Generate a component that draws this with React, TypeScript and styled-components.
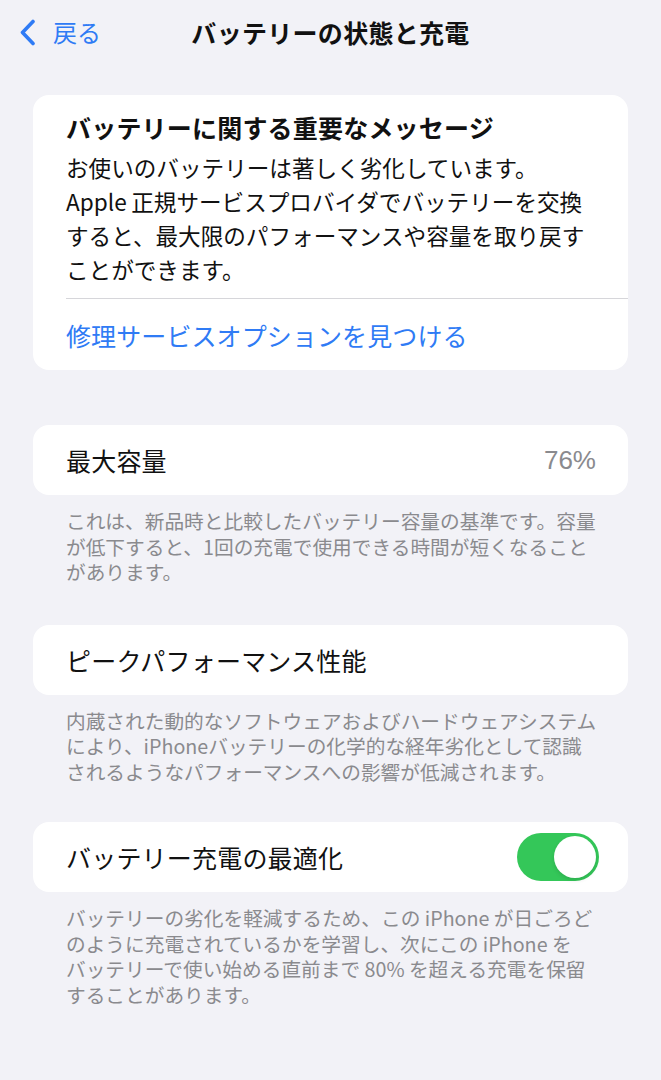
import React from 'react';
import styled, { createGlobalStyle } from 'styled-components';

const GlobalStyle = createGlobalStyle`
  html, body {
    margin: 0;
    padding: 0;
    background: #f2f2f7;
  }
  body {
    font-family: 'Noto Sans CJK JP', 'Noto Sans', sans-serif;
    -webkit-font-smoothing: antialiased;
  }
`;

const Page = styled.div`
  width: 661px;
  min-height: 1080px;
  background: #f2f2f7;
  box-sizing: border-box;
`;

const NavBar = styled.header`
  position: relative;
  height: 64px;
  display: flex;
  align-items: center;
  justify-content: center;
`;

const BackButton = styled.button`
  position: absolute;
  left: 19px;
  top: 17px;
  display: flex;
  align-items: center;
  gap: 17px;
  padding: 0;
  border: none;
  background: none;
  color: #2f7bf5;
  font-family: inherit;
  font-size: 24px;
  line-height: 30px;
`;

const Title = styled.h1`
  margin: 0;
  font-size: 25px;
  font-weight: 700;
  color: #111;
  letter-spacing: 0.3px;
  line-height: 30px;
`;

const Content = styled.main`
  display: flex;
  flex-direction: column;
  padding: 31px 33px 0 33px;
`;

const Card = styled.section<{ $mt?: number }>`
  background: #fff;
  border-radius: 16px;
  margin-top: ${p => p.$mt ?? 0}px;
  overflow: hidden;
`;

const MessageBody = styled.div`
  padding: 15px 33px 11px 33px;
`;

const MessageTitle = styled.h2`
  margin: 0;
  font-size: 25px;
  font-weight: 700;
  line-height: 34px;
  color: #111;
  letter-spacing: 0.2px;
`;

const MessageText = styled.p`
  margin: 7px 0 0 0;
  font-size: 22.6px;
  line-height: 34px;
  color: #111;
`;

const Line = styled.span`
  display: block;
  white-space: nowrap;
`;

const Divider = styled.hr`
  margin: 0 0 0 33px;
  border: none;
  border-top: 1px solid #d6d6da;
`;

const LinkRow = styled.div`
  height: 71px;
  display: flex;
  align-items: center;
  padding: 0 33px;
  color: #2f7bf5;
  font-size: 25px;
  letter-spacing: 0.1px;
`;

const Row = styled.div`
  height: 70px;
  display: flex;
  align-items: center;
  justify-content: space-between;
  padding: 0 29px 0 33px;
`;

const RowLabel = styled.span`
  font-size: 25px;
  color: #111;
  letter-spacing: 0.2px;
`;

const RowValue = styled.span`
  font-family: 'Liberation Sans', 'Noto Sans', sans-serif;
  font-size: 26px;
  color: #8a8a8e;
  padding-right: 3px;
`;

const Footer = styled.p`
  margin: 0;
  padding: 13px 33px 0 33px;
  font-size: 19.7px;
  line-height: 25.5px;
  color: #8a8a8e;
`;

const Toggle = styled.div<{ $on: boolean }>`
  position: relative;
  width: 82px;
  height: 48px;
  border-radius: 24px;
  background: ${p => (p.$on ? '#34c759' : '#e9e9eb')};
  flex-shrink: 0;
`;

const Knob = styled.div<{ $on: boolean }>`
  position: absolute;
  top: 3px;
  left: ${p => (p.$on ? '37px' : '3px')};
  width: 42px;
  height: 42px;
  border-radius: 50%;
  background: #fff;
  box-shadow: 0 2px 4px rgba(0, 0, 0, 0.12);
`;

const Chevron = () => (
  <svg width="17" height="27" viewBox="0 0 17 27" fill="none">
    <path d="M14 2.5 L3.5 13.5 L14 24.5" stroke="#2f7bf5" strokeWidth="3.6" strokeLinecap="round" strokeLinejoin="round" />
  </svg>
);

const Lines = ({ lines }: { lines: string[] }) => (
  <>
    {lines.map(l => (
      <Line key={l}>{l}</Line>
    ))}
  </>
);

export default function App() {
  return (
    <Page>
      <GlobalStyle />
      <NavBar>
        <BackButton>
          <Chevron />
          <span>戻る</span>
        </BackButton>
        <Title>バッテリーの状態と充電</Title>
      </NavBar>
      <Content>
        <Card>
          <MessageBody>
            <MessageTitle>バッテリーに関する重要なメッセージ</MessageTitle>
            <MessageText>
              <Lines
                lines={[
                  'お使いのバッテリーは著しく劣化しています。',
                  'Apple\u2009正規サービスプロバイダでバッテリーを交換',
                  'すると、最大限のパフォーマンスや容量を取り戻す',
                  'ことができます。',
                ]}
              />
            </MessageText>
          </MessageBody>
          <Divider />
          <LinkRow>修理サービスオプションを見つける</LinkRow>
        </Card>

        <Card $mt={55}>
          <Row>
            <RowLabel>最大容量</RowLabel>
            <RowValue>76%</RowValue>
          </Row>
        </Card>
        <Footer>
          <Lines
            lines={[
              'これは、新品時と比較したバッテリー容量の基準です。容量',
              'が低下すると、1回の充電で使用できる時間が短くなること',
              'があります。',
            ]}
          />
        </Footer>

        <Card $mt={40}>
          <Row>
            <RowLabel>ピークパフォーマンス性能</RowLabel>
          </Row>
        </Card>
        <Footer>
          <Lines
            lines={[
              '内蔵された動的なソフトウェアおよびハードウェアシステム',
              'により、iPhoneバッテリーの化学的な経年劣化として認識',
              'されるようなパフォーマンスへの影響が低減されます。',
            ]}
          />
        </Footer>

        <Card $mt={38}>
          <Row>
            <RowLabel>バッテリー充電の最適化</RowLabel>
            <Toggle $on>
              <Knob $on />
            </Toggle>
          </Row>
        </Card>
        <Footer>
          <Lines
            lines={[
              'バッテリーの劣化を軽減するため、この iPhone が日ごろど',
              'のように充電されているかを学習し、次にこの iPhone を',
              'バッテリーで使い始める直前まで 80% を超える充電を保留',
              'することがあります。',
            ]}
          />
        </Footer>
      </Content>
    </Page>
  );
}
